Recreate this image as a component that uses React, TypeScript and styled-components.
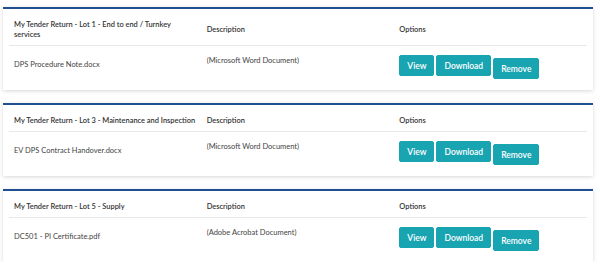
import styled, { createGlobalStyle } from "styled-components";

const GlobalStyle = createGlobalStyle`
  body {
    margin: 0;
    background: #fff;
    font-family: Lato, "Open Sans", Arial, sans-serif;
    color: #444;
  }
`;

const Page = styled.div`
  display: flex;
  flex-direction: column;
  gap: 13px;
  padding: 7px 7px 0 3px;
`;

const Card = styled.div`
  background: #fff;
  border-top: 2px solid #1f4f91;
  box-shadow: 0 1px 4px rgba(0, 0, 0, 0.16);
  padding: 6px;
`;

const Table = styled.table`
  width: 100%;
  border-collapse: collapse;
  table-layout: fixed;
`;

const Th = styled.th`
  text-align: left;
  font-size: 7.45px;
  line-height: 10px;
  font-weight: 600;
  color: #333;
  padding: 5px 3px 5px 5px;
  vertical-align: middle;
  border-bottom: 1px solid #e8e8e8;
`;

const Td = styled.td<{ $align?: string }>`
  font-size: 7.5px;
  line-height: 10px;
  color: #444;
  height: 38px;
  box-sizing: border-box;
  padding: ${(p) => (p.$align === "top" ? "9px 5px 5px" : "5px")};
  vertical-align: ${(p) => p.$align ?? "middle"};
`;

const DescText = styled.div`
  padding-top: 1px;
`;

const Buttons = styled.div`
  display: flex;
  align-items: flex-start;
  gap: 2px;
`;

const Button = styled.button<{ $low?: boolean }>`
  background: #19a4b2;
  color: #fff;
  border: 1px solid #19a4b2;
  border-radius: 2px;
  font-family: Lato, Arial, sans-serif;
  font-weight: 600;
  font-size: 8.5px;
  height: 21px;
  padding: 0 7px;
  margin-top: ${(p) => (p.$low ? "3px" : "0")};
  cursor: pointer;
`;

const items = [
  {
    title: "My Tender Return - Lot 1 - End to end / Turnkey services",
    file: "DPS Procedure Note.docx",
    desc: "(Microsoft Word Document)",
  },
  {
    title: "My Tender Return - Lot 3 - Maintenance and Inspection",
    file: "EV DPS Contract Handover.docx",
    desc: "(Microsoft Word Document)",
  },
  {
    title: "My Tender Return - Lot 5 - Supply",
    file: "DC501 - PI Certificate.pdf",
    desc: "(Adobe Acrobat Document)",
  },
];

export default function App() {
  return (
    <>
      <GlobalStyle />
      <Page>
        {items.map((item) => (
          <Card key={item.title}>
            <Table>
              <thead>
                <tr>
                  <Th>{item.title}</Th>
                  <Th>Description</Th>
                  <Th>Options</Th>
                </tr>
              </thead>
              <tbody>
                <tr>
                  <Td>{item.file}</Td>
                  <Td $align="top">
                    <DescText>{item.desc}</DescText>
                  </Td>
                  <Td $align="top">
                    <Buttons>
                      <Button>View</Button>
                      <Button>Download</Button>
                      <Button $low>Remove</Button>
                    </Buttons>
                  </Td>
                </tr>
              </tbody>
            </Table>
          </Card>
        ))}
      </Page>
    </>
  );
}
